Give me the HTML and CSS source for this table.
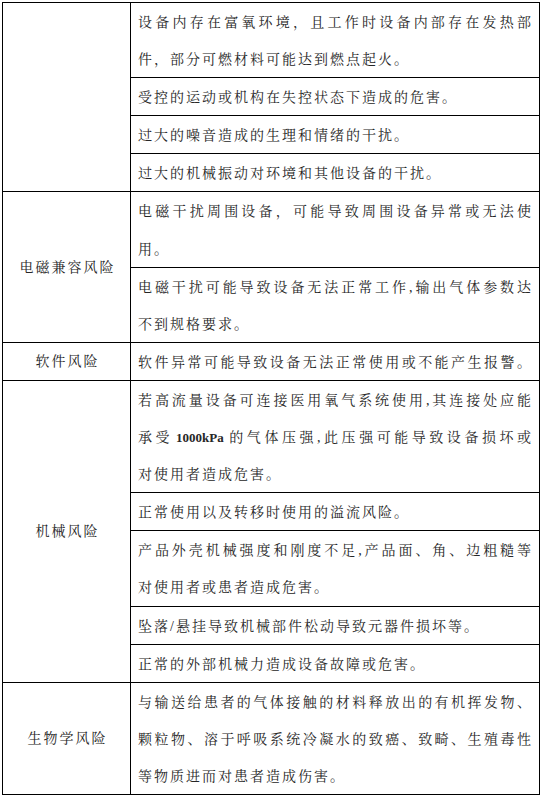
FILE: index.html
```html
<!DOCTYPE html>
<html lang="zh-CN">
<head>
<meta charset="utf-8">
<title>风险分析表</title>
<link rel="stylesheet" href="styles.css">
</head>
<body>
<table class="risk">
  <colgroup><col class="c-label"><col class="c-desc"></colgroup>
  <tbody>
    <tr>
      <td class="label" rowspan="4"></td>
      <td class="desc"><span class="ln j">设备内存在富氧环境，且工作时设备内部存在发热部</span><span class="ln">件，部分可燃材料可能达到燃点起火。</span></td>
    </tr>
    <tr><td class="desc"><span class="ln">受控的运动或机构在失控状态下造成的危害。</span></td></tr>
    <tr><td class="desc"><span class="ln">过大的噪音造成的生理和情绪的干扰。</span></td></tr>
    <tr><td class="desc"><span class="ln">过大的机械振动对环境和其他设备的干扰。</span></td></tr>

    <tr>
      <td class="label" rowspan="2">电磁兼容风险</td>
      <td class="desc"><span class="ln j">电磁干扰周围设备，可能导致周围设备异常或无法使</span><span class="ln">用。</span></td>
    </tr>
    <tr><td class="desc"><span class="ln j">电磁干扰可能导致设备无法正常工作,输出气体参数达</span><span class="ln">不到规格要求。</span></td></tr>

    <tr>
      <td class="label">软件风险</td>
      <td class="desc"><span class="ln j">软件异常可能导致设备无法正常使用或不能产生报警。</span></td>
    </tr>

    <tr>
      <td class="label" rowspan="5">机械风险</td>
      <td class="desc"><span class="ln j">若高流量设备可连接医用氧气系统使用,其连接处应能</span><span class="ln j">承受<span class="latin">1000kPa</span>的气体压强,此压强可能导致设备损坏或</span><span class="ln">对使用者造成危害。</span></td>
    </tr>
    <tr><td class="desc"><span class="ln">正常使用以及转移时使用的溢流风险。</span></td></tr>
    <tr><td class="desc"><span class="ln j">产品外壳机械强度和刚度不足,产品面、角、边粗糙等</span><span class="ln">对使用者或患者造成危害。</span></td></tr>
    <tr><td class="desc"><span class="ln">坠落/悬挂导致机械部件松动导致元器件损坏等。</span></td></tr>
    <tr><td class="desc"><span class="ln">正常的外部机械力造成设备故障或危害。</span></td></tr>

    <tr>
      <td class="label">生物学风险</td>
      <td class="desc"><span class="ln j">与输送给患者的气体接触的材料释放出的有机挥发物、</span><span class="ln j">颗粒物、溶于呼吸系统冷凝水的致癌、致畸、生殖毒性</span><span class="ln">等物质进而对患者造成伤害。</span></td>
    </tr>
  </tbody>
</table>
</body>
</html>
```

FILE: styles.css
```css
html, body {
  margin: 0;
  padding: 0;
  background: #ffffff;
}

body {
  padding: 2px 0 0 2px;
  font-family: "Liberation Serif", "Noto Serif CJK SC", "Noto Sans CJK SC", serif;
  font-size: 14px;
  color: #262626;
}

.risk {
  border-collapse: collapse;
  table-layout: fixed;
  width: 537px;
}

.c-label { width: 128px; }
.c-desc { width: 409px; }

.risk td {
  border: 1px solid #000000;
  padding: 0;
  line-height: 37.1px;
  letter-spacing: 2px;
}

.label {
  text-align: center;
  vertical-align: middle;
  padding-left: 2px !important;
}

.desc {
  vertical-align: top;
  padding: 0 6px 0 7px !important;
  text-align: left;
}

.ln {
  display: block;
  box-sizing: border-box;
  height: 37.1px;
  padding-top: 2px;
  line-height: 35.1px;
  white-space: nowrap;
}

.ln.j {
  text-align: justify;
  text-align-last: justify;
}

.latin {
  font-family: "Liberation Serif", serif;
  font-weight: bold;
  font-size: 13px;
  letter-spacing: 0;
  margin: 0 4px 0 3px;
}
```
